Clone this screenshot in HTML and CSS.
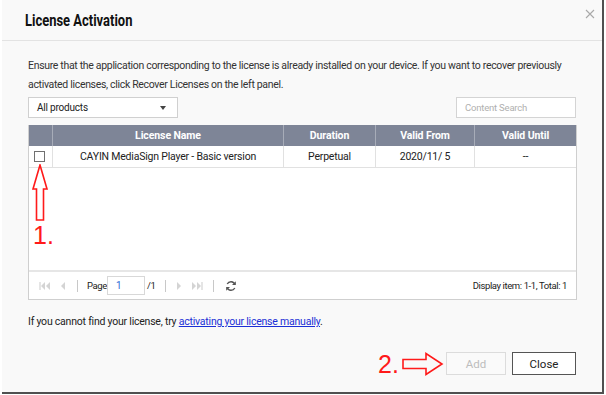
FILE: index.html
```html
<!DOCTYPE html>
<html>
<head>
<meta charset="utf-8">
<link rel="stylesheet" href="styles.css">
</head>
<body>
<div class="dialog">
  <div class="header">
    <h1 class="title">License Activation</h1>
    <span class="close-x">
      <svg width="10" height="10" viewBox="0 0 10 10"><path d="M1 1L9 9M9 1L1 9" stroke="#a9a9a9" stroke-width="1.1"/></svg>
    </span>
  </div>
  <div class="content">
    <p class="intro">Ensure that the application corresponding to the license is already installed on your device. If you want to recover previously activated licenses, click Recover Licenses on the left panel.</p>
    <div class="filters">
      <div class="select"><span>All products</span><span class="caret"></span></div>
      <div class="search">Content Search</div>
    </div>
    <div class="table">
      <div class="thead">
        <div class="c c0"></div>
        <div class="c c1">License Name</div>
        <div class="c c2">Duration</div>
        <div class="c c3">Valid From</div>
        <div class="c c4">Valid Until</div>
      </div>
      <div class="trow">
        <div class="c c0"><span class="checkbox"></span></div>
        <div class="c c1">CAYIN MediaSign Player - Basic version</div>
        <div class="c c2">Perpetual</div>
        <div class="c c3">2020/11/ 5</div>
        <div class="c c4">--</div>
      </div>
      <div class="tbody-space"></div>
      <div class="pager">
        <div class="pager-left">
          <svg class="pic" width="12" height="10" viewBox="0 0 12 10"><path d="M1 1V9" stroke="#d4d4d4" stroke-width="1.2"/><path d="M6 1L2 5L6 9Z M11 1L7 5L11 9Z" fill="#d4d4d4"/></svg>
          <svg class="pic" width="8" height="10" viewBox="0 0 8 10"><path d="M6 1L2 5L6 9Z" fill="#d4d4d4"/></svg>
          <span class="sep"></span>
          <span class="page-lbl">Page</span>
          <span class="page-input">1</span>
          <span class="page-total">/1</span>
          <span class="sep"></span>
          <svg class="pic" width="8" height="10" viewBox="0 0 8 10"><path d="M2 1L6 5L2 9Z" fill="#d4d4d4"/></svg>
          <svg class="pic" width="12" height="10" viewBox="0 0 12 10"><path d="M1 1L5 5L1 9Z M6 1L10 5L6 9Z" fill="#d4d4d4"/><path d="M11 1V9" stroke="#d4d4d4" stroke-width="1.2"/></svg>
          <span class="sep"></span>
          <svg class="pic refresh" width="12" height="12" viewBox="0 0 12 12"><path d="M10 4.5A4.3 4.3 0 0 0 2.2 4" fill="none" stroke="#555" stroke-width="1.4"/><path d="M10.8 1.2V5H7Z" fill="#555"/><path d="M2 7.5A4.3 4.3 0 0 0 9.8 8" fill="none" stroke="#555" stroke-width="1.4"/><path d="M1.2 10.8V7H5Z" fill="#555"/></svg>
        </div>
        <div class="pager-right">Display item: 1-1, Total: 1</div>
      </div>
    </div>
    <p class="hint">If you cannot find your license, try <a href="#" class="link">activating your license manually</a>.</p>
  </div>
  <div class="footer">
    <button class="btn btn-disabled">Add</button>
    <button class="btn btn-close">Close</button>
  </div>

  <svg class="anno anno-up" width="18" height="58" viewBox="0 0 18 58"><path d="M9 1L16 25H12.5V56H5.5V25H2Z" fill="none" stroke="#ff1a1a" stroke-width="1.6" stroke-linejoin="miter"/></svg>
  <span class="anno-num num1">1.</span>
  <svg class="anno anno-right" width="42" height="24" viewBox="0 0 42 24"><path d="M1 7.5H24V1.5L40 12L24 22.5V16.5H1Z" fill="none" stroke="#ff1a1a" stroke-width="1.6"/></svg>
  <span class="anno-num num2">2.</span>
</div>
</body>
</html>
```

FILE: styles.css
```css
* { box-sizing: border-box; }
html, body { margin: 0; padding: 0; }
body {
  width: 606px;
  height: 395px;
  background: #ffffff;
  font-family: Roboto, "Liberation Sans", sans-serif;
  color: #333;
  overflow: hidden;
}
.dialog {
  position: relative;
  margin-left: 2px;
  width: 602px;
  height: 394px;
  background: #f9f9f9;
  border-right: 2px solid #505050;
  border-bottom: 2px solid #505050;
  display: flex;
  flex-direction: column;
}
.header {
  height: 41px;
  border-bottom: 1px solid #e3e3e3;
  display: flex;
  align-items: center;
  justify-content: space-between;
  padding: 1px 7px 0 23px;
}
.title {
  margin: 0;
  font-size: 16px;
  font-weight: 700;
  color: #111;
  transform: scaleX(0.81);
  transform-origin: left center;
}
.close-x { align-self: flex-start; margin-top: 8px; display: flex; }
.content {
  padding: 0 26px 0 26px;
  display: flex;
  flex-direction: column;
}
.intro {
  margin: 15px 0 0 0;
  font-size: 10.5px;
  letter-spacing: -0.32px;
  line-height: 19px;
  color: #333;
}
.filters {
  margin-top: 3px;
  display: flex;
  justify-content: space-between;
  height: 21px;
}
.select {
  width: 150px;
  border: 1px solid #d0d0d0;
  background: #fff;
  display: flex;
  align-items: center;
  justify-content: space-between;
  padding: 0 11px 0 8px;
  font-size: 10px;
  letter-spacing: -0.2px;
  color: #222;
}
.caret {
  width: 0; height: 0;
  border-left: 3px solid transparent;
  border-right: 3px solid transparent;
  border-top: 4px solid #444;
}
.search {
  width: 120px;
  border: 1px solid #d4d4d4;
  background: #fff;
  font-size: 9.5px;
  letter-spacing: -0.2px;
  color: #b0b0b0;
  display: flex;
  align-items: center;
  padding-left: 8px;
}
.table {
  margin-top: 7px;
  width: 549px;
  border: 1px solid #cfcfcf;
  border-top: none;
  background: #fff;
  display: flex;
  flex-direction: column;
}
.thead {
  display: flex;
  height: 21px;
  background: #7e8597;
  color: #fff;
  font-weight: 700;
  font-size: 10.5px;
  letter-spacing: -0.1px;
}
.thead .c { border-right: 1px solid #a7acb8; }
.thead .c:last-child { border-right: none; }
.c {
  display: flex;
  align-items: center;
  justify-content: center;
}
.c0 { width: 24px; }
.c1 { width: 231px; }
.c2 { width: 92px; }
.c3 { width: 99px; }
.c4 { flex: 1; }
.trow {
  display: flex;
  height: 22px;
  font-size: 10.5px;
  letter-spacing: -0.2px;
  color: #222;
  border-bottom: 1px solid #e1e1e1;
}
.trow .c { border-right: 1px solid #e1e1e1; }
.trow .c:last-child { border-right: none; }
.checkbox {
  width: 11px; height: 11px;
  border: 1px solid #707070;
  background: #fff;
  margin-left: -2px;
}
.tbody-space { height: 102px; }
.pager {
  height: 29px;
  border-top: 2px solid #e6e6e6;
  display: flex;
  align-items: center;
  justify-content: space-between;
  padding: 0 9px 0 10px;
  font-size: 9.5px;
  letter-spacing: -0.4px;
  color: #222;
}
.pager-left { display: flex; align-items: center; }
.pic { margin-right: 8px; }
.sep {
  width: 1px; height: 12px;
  background: #c8c8c8;
  margin: 0 9px 0 2px;
}
.page-input {
  width: 38px; height: 19px;
  border: 1px solid #d8d8d8;
  color: #2f6bd6;
  font-size: 10px;
  display: flex;
  align-items: center;
  padding-left: 8px;
  margin-right: 2px;
}
.page-total { margin-right: 8px; }
.refresh { margin-left: 2px; }
.hint {
  margin: 15px 0 0 0;
  font-size: 10.5px;
  letter-spacing: -0.22px;
  color: #222;
}
.link { color: #1b2fd6; text-decoration: underline; }
.footer {
  margin-top: auto;
  margin-bottom: 17px;
  display: flex;
  justify-content: flex-end;
  gap: 6px;
  padding-right: 26px;
}
.btn {
  height: 23px;
  font-family: Roboto, "Liberation Sans", sans-serif;
  font-size: 11.5px;
  background: #fff;
  padding: 0;
}
.btn-disabled {
  width: 60px;
  border: 1px solid #dcdcdc;
  color: #bdbdbd;
  background: #fafafa;
}
.btn-close {
  width: 64px;
  border: 1px solid #555;
  color: #222;
}
.anno { position: absolute; }
.anno-up { left: 29px; top: 164px; }
.anno-right { left: 400px; top: 352px; }
.anno-num {
  position: absolute;
  font-family: "Liberation Sans", sans-serif;
  font-size: 25px;
  color: #ff1a1a;
  line-height: 1;
}
.num1 { left: 31px; top: 223px; }
.num2 { left: 376px; top: 352px; }
```
